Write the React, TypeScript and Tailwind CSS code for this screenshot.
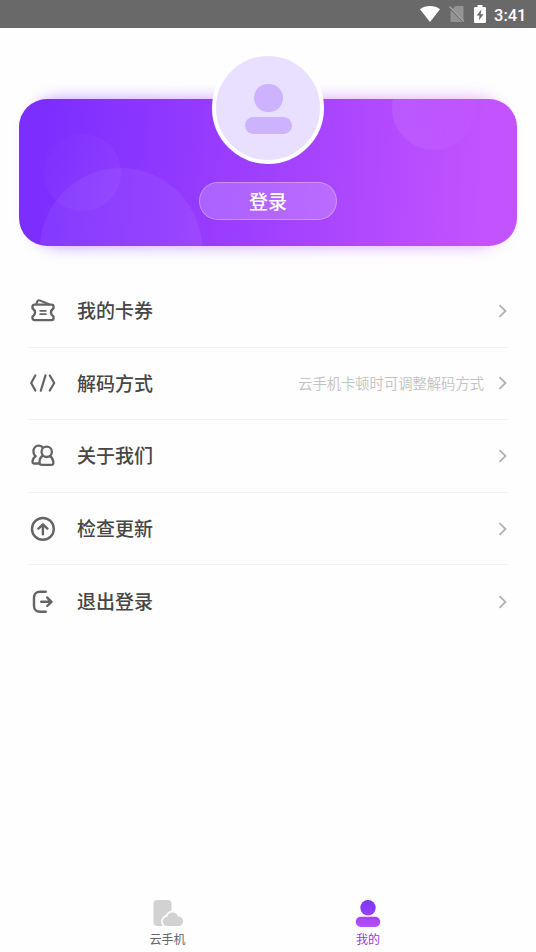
import React from 'react';

const iconProps = {
    width: 28,
    height: 28,
    viewBox: '0 0 28 28',
    fill: 'none',
    stroke: '#646464',
    strokeWidth: 2.4,
    strokeLinecap: 'round' as const,
    strokeLinejoin: 'round' as const,
};

const TicketIcon = () => (
    <svg {...iconProps}>
        <path d="M5.500 7.600h17a2 2 0 0 1 2 2v1.600c-1.800 1.400-2.600 2.600-2.600 4.200s.8 2.800 2.600 4.200v1.500a2 2 0 0 1-2 2h-17a2 2 0 0 1-2-2v-1.500c1.800-1.400 2.600-2.600 2.600-4.200s-.8-2.800-2.600-4.200V9.600a2 2 0 0 1 2-2Z" />
        <path d="M7.300 7 8.400 4.200c.5-.9 1.200-1.200 2.200-.8L20 7.200" strokeWidth={2.1} />
        <path d="M11.200 13.800h5.600M11.200 17.200h5.600" strokeWidth={1.8} />
    </svg>
);

const CodeIcon = () => (
    <svg {...iconProps} strokeWidth={2.2}>
        <path d="M6.300 6.500 2.200 14l4.100 7.500M16.500 6.400l-4.700 15.400M20.800 6.500 25.200 14l-4.400 7.500" />
    </svg>
);

const UsersIcon = () => (
    <svg {...iconProps} strokeWidth={2.3}>
        <path d="M10 21.500H5.300c-1.300 0-1.900-.7-1.800-2 .2-2.300 1.300-4.200 3.200-5.300-1.500-1.200-2.300-2.800-2.300-4.700 0-3.400 2.300-5.900 5.400-5.900 1.400 0 2.600.5 3.500 1.300" />
        <circle cx="17.700" cy="9.800" r="5.200" />
        <path d="M13.700 13.700c-2.200 1.400-3.200 3.700-3.200 6.700 0 1.600.8 2.400 2.300 2.400h9.500c1.500 0 2.300-.8 2.100-2.400-.2-2.700-1.300-4.900-3.200-6.200" />
    </svg>
);

const UpdateIcon = () => (
    <svg {...iconProps}>
        <circle cx="13.900" cy="13.900" r="10.900" />
        <path d="M13.900 19.200V9.500M9.400 13.600l4.500-4.300 4.500 4.300" />
    </svg>
);

const LogoutIcon = () => (
    <svg {...iconProps}>
        <path d="M16.700 3.700H11c-3.600 0-6 2.200-6 5.800V18c0 3.600 2.400 5.800 6 5.800h5.700M12.200 13.800h10M18.200 9.600l4.300 4.200-4.300 4.200" />
    </svg>
);

const menuItems = [
    { icon: <TicketIcon />, label: '我的卡券' },
    { icon: <CodeIcon />, label: '解码方式', hint: '云手机卡顿时可调整解码方式' },
    { icon: <UsersIcon />, label: '关于我们' },
    { icon: <UpdateIcon />, label: '检查更新' },
    { icon: <LogoutIcon />, label: '退出登录' },
];

function StatusBar() {
    return (
        <div className="flex h-7 shrink-0 items-center justify-end bg-[#696969] pr-[10px] text-white">
            <svg width="20" height="16" viewBox="0 0 20 16" className="mr-[9px]">
                <path d="M0 3.300C5.800-1.100 14.200-1.100 20 3.300L10 16Z" fill="#fff" />
            </svg>
            <svg width="16" height="18" viewBox="0 0 16 18" className="mr-[9px]">
                <path d="M6.500 1H14.500V17H1.500V6Z" fill="#939393" />
                <path d="M.5 2.500 15 17" stroke="#696969" strokeWidth="2" />
                <path d="M.5 1.500 15 16.500" stroke="#a5a5a5" strokeWidth="1.400" />
            </svg>
            <svg width="12" height="18" viewBox="0 0 12 18" className="mr-[8px]">
                <path d="M3.500 0h5v2H11a1 1 0 0 1 1 1v14a1 1 0 0 1-1 1H1a1 1 0 0 1-1-1V3a1 1 0 0 1 1-1h2.500Z" fill="#fff" />
                <path d="M7.300 4.500 2.600 10.600h2.900L4.900 15.300 9.500 9.200H6.600Z" fill="#696969" />
            </svg>
            <span className="w-[32px] pt-[3px] font-['Roboto'] text-[16.5px] leading-5 font-medium">3:41</span>
        </div>
    );
}

function ProfileCard() {
    return (
        <div className="relative mx-[19px] mt-[71px] h-[147px] shrink-0">
            <div className="absolute inset-x-3 inset-y-0 rounded-[28px] bg-linear-to-r from-[#7b2eff] to-[#c253ff] opacity-50 blur-[8px]" />
            <div className="relative flex h-full flex-col items-center rounded-[28px] bg-[linear-gradient(94deg,#7b2eff_5%,#a040ff_50%,#c253ff_92%)]">
                {/* Cercles décoratifs */}
                <div className="absolute inset-0 overflow-hidden rounded-[28px]">
                    <div className="absolute top-[35px] left-[25px] size-[77px] rounded-full bg-linear-to-br from-white/1 to-white/5" />
                    <div className="absolute top-[69px] left-[21px] size-[162px] rounded-full bg-white/6" />
                    <div className="absolute -top-[33px] left-[373px] size-[84px] rounded-full bg-linear-to-r from-white/8 to-white/1" />
                </div>
                <div className="relative -mt-[47px] flex size-[112px] shrink-0 flex-col items-center rounded-full border-4 border-white bg-[#e9e0ff] pt-7">
                    <div className="h-[28px] w-[29px] rounded-full bg-[#ccb2ff]" />
                    <div className="mt-[5px] h-[17px] w-[47px] rounded-full bg-[#ccb2ff]" />
                </div>
                <button className="relative mt-[18px] flex h-[38px] w-[138px] items-center justify-center rounded-full border border-white/30 bg-white/20 text-[19px] font-medium text-white">
                    登录
                </button>
            </div>
        </div>
    );
}

export default function App() {
    return (
        <div className="flex h-[952px] w-[536px] flex-col overflow-hidden bg-[#fefefe] font-['Noto_Sans_CJK_SC',sans-serif]">
            <StatusBar />
            <ProfileCard />

            <div className="mx-7 mt-[29px] flex flex-col">
                {menuItems.map((item, idx) => (
                    <div
                        key={idx}
                        className="flex h-[72.6px] items-center border-b border-[#f2f2f2] pl-px last:border-b-0"
                    >
                        {item.icon}
                        <span className="-mt-px ml-5 text-[19px] leading-7 font-medium text-[#464646]">{item.label}</span>
                        <span className="ml-auto text-[14.3px] leading-5 font-[350] text-[#c2c2c2]">{item.hint}</span>
                        <svg width="10" height="14" viewBox="0 0 10 14" className="ml-[14px]" fill="none">
                            <path d="M1.500 1.200 7.500 7l-6 5.800" stroke="#b2b2b2" strokeWidth="1.800" />
                        </svg>
                    </div>
                ))}
            </div>

            {/* Navigation */}
            <div className="mt-auto flex h-[56px] shrink-0 pr-0.5 pl-[67px] text-center text-[12px] leading-4">
                <div className="flex w-[201px] flex-col items-center text-[#666]">
                    <svg width="30" height="28" viewBox="0 0 30 28" className="mt-[3px]">
                        <rect x="0.500" y="1" width="18" height="26" rx="4" fill="#d2d2d2" />
                        <path
                            d="M14.300 28a5.600 5.600 0 0 1-.7-11.100 6.400 6.400 0 0 1 12-.2 5.600 5.600 0 0 1-.6 11.300Z"
                            fill="#d2d2d2"
                            stroke="#fefefe"
                            strokeWidth="1.800"
                        />
                    </svg>
                    <span className="mt-1">云手机</span>
                </div>
                <div className="flex w-[200px] flex-col items-center text-[#8b3fe0]">
                    <svg width="26" height="28" viewBox="0 0 26 28" className="mt-[3px]">
                        <defs>
                            <linearGradient id="me-head" x1="0" y1="0" x2="0" y2="1">
                                <stop stopColor="#7b35f5" />
                                <stop offset="1" stopColor="#9a41fa" />
                            </linearGradient>
                            <linearGradient id="me-body" x1="0" y1="0" x2="0" y2="1">
                                <stop stopColor="#a044fa" />
                                <stop offset="1" stopColor="#b94ffc" />
                            </linearGradient>
                        </defs>
                        <circle cx="13" cy="8.800" r="7.700" fill="url(#me-head)" />
                        <rect x="0.800" y="17.700" width="24.400" height="10.300" rx="5" fill="url(#me-body)" />
                    </svg>
                    <span className="mt-1">我的</span>
                </div>
            </div>
        </div>
    );
}
